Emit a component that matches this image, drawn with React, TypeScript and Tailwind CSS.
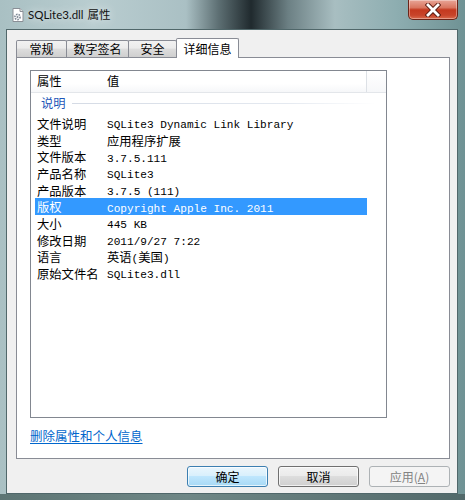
import React from "react";

const CJK = /[\u3000-\u9fff\uff00-\uffef]/;

function Mixed({ text }: { text: string }) {
  const runs: { s: string; cjk: boolean }[] = [];
  for (const ch of text) {
    const c = CJK.test(ch);
    const last = runs[runs.length - 1];
    if (last && last.cjk === c) last.s += ch;
    else runs.push({ s: ch, cjk: c });
  }
  return (
    <>
      {runs.map((r, i) =>
        r.cjk ? (
          <span key={i} className="font-['Noto_Sans_CJK_SC',sans-serif] text-[12.3px]">
            {r.s}
          </span>
        ) : (
          <span key={i} className="font-['Liberation_Mono',monospace] text-[11.1px]">
            {r.s.replace(/ /g, "\u00a0")}
          </span>
        )
      )}
    </>
  );
}

const rows: [string, string][] = [
  ["文件说明", "SQLite3 Dynamic Link Library"],
  ["类型", "应用程序扩展"],
  ["文件版本", "3.7.5.111"],
  ["产品名称", "SQLite3"],
  ["产品版本", "3.7.5 (111)"],
  ["版权", "Copyright Apple Inc. 2011"],
  ["大小", "445 KB"],
  ["修改日期", "2011/9/27 7:22"],
  ["语言", "英语(美国)"],
  ["原始文件名", "SQLite3.dll"],
];

function Tab({ label, w, selected }: { label: string; w: string; selected?: boolean }) {
  return selected ? (
    <div
      className={`${w} h-[20px] -mb-[1px] bg-white border border-[#898c95] border-b-0 rounded-t-[2px] flex items-center justify-center text-[12px] text-black font-['Noto_Sans_CJK_SC',sans-serif] relative z-10`}
    >
      {label}
    </div>
  ) : (
    <div
      className={`${w} h-[17px] -mr-[1px] bg-[linear-gradient(#f2f2f2,#ebebeb_45%,#dddddd_50%,#cfcfcf)] border border-[#898c95] border-b-0 rounded-t-[2px] flex items-center justify-center text-[12px] text-black font-['Noto_Sans_CJK_SC',sans-serif]`}
    >
      {label}
    </div>
  );
}

export default function App() {
  return (
    <div className="w-[465px] h-[500px] relative overflow-hidden flex flex-col bg-[linear-gradient(90deg,#a9c0c3_0%,#b9cdd0_20%,#aac0c4_40%,#5d6f73_47%,#202a2e_54%,#6c8084_62%,#a8bec1_72%,#8eaeb1_85%,#6f9294_100%)] select-none">
      {/* title bar */}
      <div className="h-[29px] shrink-0 flex items-center pl-[10px] gap-[2px]">
        <svg width="16" height="16" viewBox="0 0 16 16">
          <path d="M3 1.5h7l3 3v10H3z" fill="#ffffff" stroke="#8a8f96" strokeWidth="1" />
          <path d="M10 1.5v3h3" fill="#e8e8e8" stroke="#8a8f96" strokeWidth="1" />
          <circle cx="7.5" cy="10" r="2.6" fill="none" stroke="#7c8794" strokeWidth="1.6" strokeDasharray="1.6 1" />
          <circle cx="7.5" cy="10" r="1" fill="#7c8794" />
        </svg>
        <span className="w-[96px] font-['Lato',sans-serif] text-[11.5px] text-[#111] leading-none [text-shadow:0_0_8px_rgba(255,255,255,0.9)] whitespace-nowrap flex items-center">
          <span>SQLite3.dll</span>
          <span className="ml-[4px] font-['Noto_Sans_CJK_SC',sans-serif] text-[11.5px]">属性</span>
        </span>
      </div>
      {/* close button */}
      <div className="absolute top-0 right-[7px] w-[50px] h-[20px] rounded-b-[5px] border border-t-0 border-[#6b2418] bg-[linear-gradient(#e8a597,#d97660_40%,#c4391f_52%,#c8442a_80%,#d96a4c)] flex items-center justify-center shadow-[inset_0_0_0_1px_rgba(255,255,255,0.35)]">
        <svg width="16" height="14" viewBox="0 0 16 14">
          <path d="M3 2l10 10M13 2L3 12" stroke="#5a1a10" strokeWidth="4.6" strokeLinecap="square" />
          <path d="M3 2l10 10M13 2L3 12" stroke="#ffffff" strokeWidth="2.8" strokeLinecap="square" />
        </svg>
      </div>

      {/* client area */}
      <div className="ml-[6px] mr-[7px] h-[465px] shrink-0 border border-[#50676a] bg-[#f0f0f0] flex flex-col">
        {/* tabs */}
        <div className="mt-[7px] ml-[9px] flex items-end h-[20px]">
          <Tab label="常规" w="w-[51px]" />
          <Tab label="数字签名" w="w-[63px]" />
          <Tab label="安全" w="w-[49px]" />
          <Tab label="详细信息" w="w-[63px]" selected />
        </div>
        {/* tab page */}
        <div className="ml-[9px] w-[434px] h-[402px] bg-white border border-[#898c95] flex flex-col">
          {/* listview */}
          <div className="mt-[12px] ml-[13px] w-[357px] h-[348px] border border-[#828790] bg-white flex flex-col">
            {/* header */}
            <div className="h-[22px] flex border-b border-[#e3e6ea] bg-[linear-gradient(#ffffff,#ffffff_60%,#f6f7f9)]">
              <div className="w-[336px] h-full border-r border-[#dde1e6] flex items-center font-['Noto_Sans_CJK_SC',sans-serif] text-[12.3px] text-black">
                <span className="pl-[6px] w-[76px]">属性</span>
                <span>值</span>
              </div>
              <div className="flex-1 bg-[linear-gradient(#ffffff,#f6f7f9)]" />
            </div>
            {/* group */}
            <div className="mt-[1.7px] h-[20px] pb-[3px] flex items-center pl-[10px] pr-[10px]">
              <span className="font-['Noto_Sans_CJK_SC',sans-serif] text-[12.3px] text-[#1e56b8]">说明</span>
              <div className="ml-[6px] flex-1 h-px bg-[linear-gradient(90deg,#d5dbe5,#e4e9f0_70%,#ffffff)]" />
            </div>
            {/* rows */}
            {rows.map(([k, v], i) => {
              const sel = k === "版权";
              return (
                <div
                  key={i}
                  className={`ml-[4px] w-[332px] h-[16.67px] flex items-center leading-none whitespace-nowrap ${
                    sel ? "bg-[#3399ff] text-white" : "text-black"
                  }`}
                >
                  <span className="pl-[2px] w-[72px] shrink-0">
                    <Mixed text={k} />
                  </span>
                  <span>
                    <Mixed text={v} />
                  </span>
                </div>
              );
            })}
          </div>
          {/* link */}
          <div className="mt-[9px] ml-[13px] leading-none">
            <span className="font-['Noto_Sans_CJK_SC',sans-serif] text-[12.5px] text-[#0066cc] underline underline-offset-[2px]">
              删除属性和个人信息
            </span>
          </div>
        </div>
        {/* buttons */}
        <div className="mt-[7px] mr-[7px] flex justify-end gap-[10px]">
          <div className="w-[81px] h-[21px] rounded-[3px] border border-[#3c7fb1] bg-[linear-gradient(#eaf6fd,#d9f0fc_45%,#bee6fd_50%,#a7d9f5)] shadow-[inset_0_0_0_1px_rgba(255,255,255,0.7)] flex items-center justify-center font-['Noto_Sans_CJK_SC',sans-serif] text-[12px] text-black">
            确定
          </div>
          <div className="w-[81px] h-[21px] rounded-[3px] border border-[#707070] bg-[linear-gradient(#f2f2f2,#ebebeb_45%,#dddddd_50%,#cfcfcf)] shadow-[inset_0_0_0_1px_rgba(255,255,255,0.7)] flex items-center justify-center font-['Noto_Sans_CJK_SC',sans-serif] text-[12px] text-black">
            取消
          </div>
          <div className="w-[81px] h-[21px] rounded-[3px] border border-[#adb2b5] bg-[#f4f4f4] flex items-center justify-center font-['Noto_Sans_CJK_SC',sans-serif] text-[12px] text-[#838383]">
            应用(<span className="underline">A</span>)
          </div>
        </div>
      </div>
      {/* bottom frame */}
      <div className="flex-1 bg-[linear-gradient(90deg,#5d7574,#6f8786_40%,#52696a)]" />
    </div>
  );
}
